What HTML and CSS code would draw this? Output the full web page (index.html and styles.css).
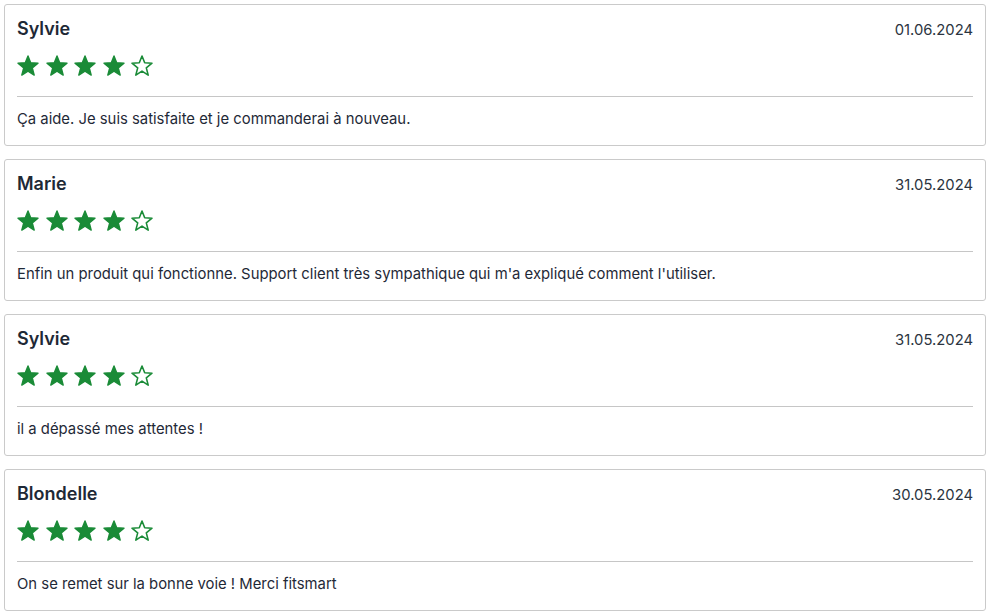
FILE: index.html
```html
<!DOCTYPE html>
<html lang="fr">
<head>
<meta charset="utf-8">
<link rel="stylesheet" href="styles.css">
</head>
<body>
<svg width="0" height="0" class="defs">
  <defs>
    <path id="star" d="M11 1 L13.7 7.7 L21 8.2 L15.3 12.9 L17.2 20.1 L11 16.1 L4.8 20.1 L6.7 12.9 L1 8.2 L8.3 7.7 Z"/>
  </defs>
</svg>
<div class="reviews">
  <div class="card">
    <div class="head"><span class="name">Sylvie</span><span class="date">01.06.2024</span></div>
    <div class="stars">
      <svg class="star" viewBox="0 0 22 22"><use href="#star"/></svg>
      <svg class="star" viewBox="0 0 22 22"><use href="#star"/></svg>
      <svg class="star" viewBox="0 0 22 22"><use href="#star"/></svg>
      <svg class="star" viewBox="0 0 22 22"><use href="#star"/></svg>
      <svg class="star empty" viewBox="0 0 22 22"><use href="#star"/></svg>
    </div>
    <div class="divider"></div>
    <p class="text">Ça aide. Je suis satisfaite et je commanderai à nouveau.</p>
  </div>
  <div class="card">
    <div class="head"><span class="name">Marie</span><span class="date">31.05.2024</span></div>
    <div class="stars">
      <svg class="star" viewBox="0 0 22 22"><use href="#star"/></svg>
      <svg class="star" viewBox="0 0 22 22"><use href="#star"/></svg>
      <svg class="star" viewBox="0 0 22 22"><use href="#star"/></svg>
      <svg class="star" viewBox="0 0 22 22"><use href="#star"/></svg>
      <svg class="star empty" viewBox="0 0 22 22"><use href="#star"/></svg>
    </div>
    <div class="divider"></div>
    <p class="text">Enfin un produit qui fonctionne. Support client très sympathique qui m'a expliqué comment l'utiliser.</p>
  </div>
  <div class="card">
    <div class="head"><span class="name">Sylvie</span><span class="date">31.05.2024</span></div>
    <div class="stars">
      <svg class="star" viewBox="0 0 22 22"><use href="#star"/></svg>
      <svg class="star" viewBox="0 0 22 22"><use href="#star"/></svg>
      <svg class="star" viewBox="0 0 22 22"><use href="#star"/></svg>
      <svg class="star" viewBox="0 0 22 22"><use href="#star"/></svg>
      <svg class="star empty" viewBox="0 0 22 22"><use href="#star"/></svg>
    </div>
    <div class="divider"></div>
    <p class="text">il a dépassé mes attentes !</p>
  </div>
  <div class="card">
    <div class="head"><span class="name">Blondelle</span><span class="date">30.05.2024</span></div>
    <div class="stars">
      <svg class="star" viewBox="0 0 22 22"><use href="#star"/></svg>
      <svg class="star" viewBox="0 0 22 22"><use href="#star"/></svg>
      <svg class="star" viewBox="0 0 22 22"><use href="#star"/></svg>
      <svg class="star" viewBox="0 0 22 22"><use href="#star"/></svg>
      <svg class="star empty" viewBox="0 0 22 22"><use href="#star"/></svg>
    </div>
    <div class="divider"></div>
    <p class="text">On se remet sur la bonne voie ! Merci fitsmart</p>
  </div>
</div>
</body>
</html>
```
FILE: styles.css
```css
html, body {
  margin: 0;
  padding: 0;
  background: #ffffff;
}
body {
  font-family: Inter, "Noto Sans", sans-serif;
  color: #1f2937;
  padding: 4px 3px 0 4px;
}
.defs {
  position: absolute;
  width: 0;
  height: 0;
}
.reviews {
  display: flex;
  flex-direction: column;
  gap: 13px;
}
.card {
  border: 1px solid #cacaca;
  border-radius: 3px;
  padding: 10px 12px 15.5px 12px;
}
.head {
  display: flex;
  justify-content: space-between;
  align-items: baseline;
}
.name {
  font-size: 18px;
  font-weight: 600;
  line-height: 27px;
  color: #1e2936;
}
.date {
  font-size: 14.8px;
  line-height: 21px;
  color: #2b3440;
}
.stars {
  display: flex;
  gap: 6.5px;
  margin-top: 13px;
  height: 22px;
}
.star {
  width: 22px;
  height: 22px;
  fill: #1a8b37;
  stroke: #1a8b37;
  stroke-width: 1.4;
  stroke-linejoin: round;
}
.star.empty {
  fill: none;
  stroke-width: 1.6;
}
.divider {
  height: 1px;
  background: #c6c6c6;
  margin-top: 19px;
}
.text {
  margin: 10.5px 0 0 0;
  font-size: 14.85px;
  line-height: 22px;
  color: #1f2937;
}
```
